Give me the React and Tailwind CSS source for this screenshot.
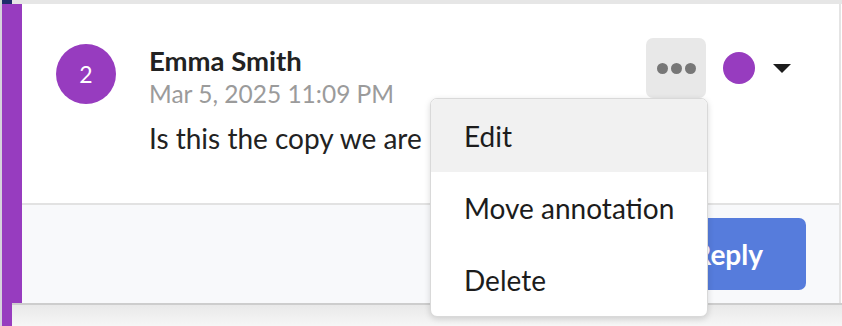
const menuItems = ["Edit", "Move annotation", "Delete"];

const CommentCard = () => {
  return (
    <div className="flex h-[299px]">
      <div className="w-[2px] bg-[#d6d1dc]" />
      <div className="w-[20px] bg-[#973cbf]" />
      <div className="flex-1 flex flex-col border-r-2 border-[#e4e4e4]">
        {/* header + body */}
        <div className="h-[199px] bg-white flex items-start pl-[34px] pr-[48px] pt-[34px]">
          <div className="mt-[6px] w-[60px] h-[60px] rounded-full bg-[#973cbf] flex items-center justify-center text-white text-[23px] shrink-0">
            2
          </div>
          <div className="ml-[33px] flex-1 pt-[7px]">
            <div className="text-[27.5px] leading-[32px] font-bold text-[#222]">Emma Smith</div>
            <div className="text-[24.5px] leading-[29px] text-[#9b9b9b] mt-[2px]">Mar 5, 2025 11:09 PM</div>
            <div className="text-[28px] leading-[32px] text-[#222] mt-[14px]">Is this the copy we are</div>
          </div>
          <button className="w-[60px] h-[60px] rounded-[7px] bg-[#e8e8e8] flex items-center justify-center gap-[3px]">
            <span className="w-[11px] h-[11px] rounded-full bg-[#777]" />
            <span className="w-[11px] h-[11px] rounded-full bg-[#777]" />
            <span className="w-[11px] h-[11px] rounded-full bg-[#777]" />
          </button>
          <div className="ml-[17px] mt-[14px] w-[32px] h-[32px] rounded-full bg-[#973cbf]" />
          <svg className="ml-[18px] mt-[26px]" width="18" height="9" viewBox="0 0 18 9">
            <path d="M0 0 L18 0 L9 9 Z" fill="#1c1c1c" />
          </svg>
        </div>
        <div className="h-[2px] bg-[#e2e2e2]" />
        {/* footer */}
        <div className="flex-1 bg-[#f8f9fb] flex justify-end items-start pt-[13px] pr-[33px]">
          <button className="h-[72px] px-[43px] rounded-[7px] bg-[#567cdc] text-white text-[28px] font-bold">
            Reply
          </button>
        </div>
      </div>
      <div className="w-[1px] bg-white" />
    </div>
  );
};

const App = () => {
  return (
    <div className="w-[842px] h-[326px] overflow-hidden relative bg-white font-[Lato,sans-serif] flex flex-col">
      <div className="h-[4px] flex shrink-0">
        <div className="w-[2px] bg-[#d8d8d8]" />
        <div className="w-[10px] bg-[#1e2d6b]" />
        <div className="flex-1 bg-[#e6e6e6]" />
      </div>

      <CommentCard />

      <div className="flex flex-1">
        <div className="w-[2px] bg-[#d6d1dc]" />
        <div className="w-[10px] bg-[#973cbf]" />
        <div className="flex-1 flex flex-col">
          <div className="h-[2px] bg-[#cdcdcd]" />
          <div className="flex-1 bg-gradient-to-b from-[#e9e9e9] to-[#f6f6f6]" />
        </div>
      </div>

      {/* dropdown menu */}
      <div className="absolute left-[430px] top-[98px] w-[278px] bg-white border border-[#d9d9d9] rounded-[7px] shadow-[0_2px_6px_rgba(0,0,0,0.15)] overflow-hidden">
        {menuItems.map((item, i) => (
          <div
            key={item}
            className={`flex items-center pl-[33px] text-[28px] text-[#1c1c1c] ${i === 0 ? "h-[73px] bg-[#f1f1f1]" : "h-[72px]"}`}
          >
            {item}
          </div>
        ))}
      </div>
    </div>
  );
};

export default App;
